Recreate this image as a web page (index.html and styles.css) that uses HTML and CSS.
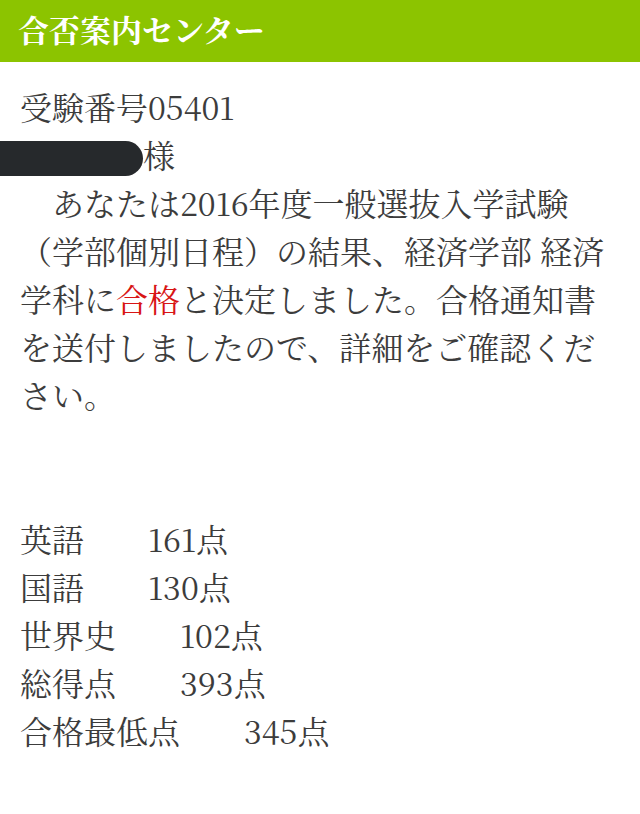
FILE: index.html
```html
<!DOCTYPE html>
<html lang="ja">
<head>
<meta charset="utf-8">
<title>合否案内センター</title>
<link rel="stylesheet" href="styles.css">
</head>
<body>
<header class="header">
  <h1 class="header-title">合否案内センター</h1>
</header>
<main class="content">
  <p class="line">受験番号05401</p>
  <p class="line"><span class="redacted"></span>様</p>
  <p class="message">　あなたは2016年度一般選抜入学試験（学部個別日程）の結果、経済学部 経済学科に<span class="pass">合格</span>と決定しました。合格通知書を送付しましたので、詳細をご確認ください。</p>
  <div class="spacer"></div>
  <ul class="scores">
    <li>英語　　161点</li>
    <li>国語　　130点</li>
    <li>世界史　　102点</li>
    <li>総得点　　393点</li>
    <li>合格最低点　　345点</li>
  </ul>
</main>
</body>
</html>
```

FILE: styles.css
```css
html, body {
  margin: 0;
  padding: 0;
  background: #ffffff;
}

body {
  font-family: "Noto Serif CJK JP", "Liberation Serif", "Noto Sans CJK JP", serif;
  color: #3c3c3c;
}

.header {
  background: #8cc400;
  height: 62px;
  display: flex;
  align-items: center;
  padding: 0 18px;
  box-sizing: border-box;
}

.header-title {
  margin: 0 0 5px 0;
  font-family: "Noto Serif CJK JP", "Noto Sans CJK JP", serif;
  font-size: 31px;
  font-weight: bold;
  color: #ffffff;
  line-height: 1;
}

.content {
  padding: 20px 20px 0 20px;
  font-size: 32px;
  line-height: 48px;
}

.line,
.message {
  margin: 0;
}

.redacted {
  display: inline-block;
  vertical-align: middle;
  width: 143px;
  height: 35px;
  margin-left: -20px;
  margin-top: -2px;
  background: #26292c;
  border-radius: 0 18px 18px 0;
}

.pass {
  color: #d81515;
}

.spacer {
  height: 96px;
}

.scores {
  list-style: none;
  margin: 0;
  padding: 0;
}
```
